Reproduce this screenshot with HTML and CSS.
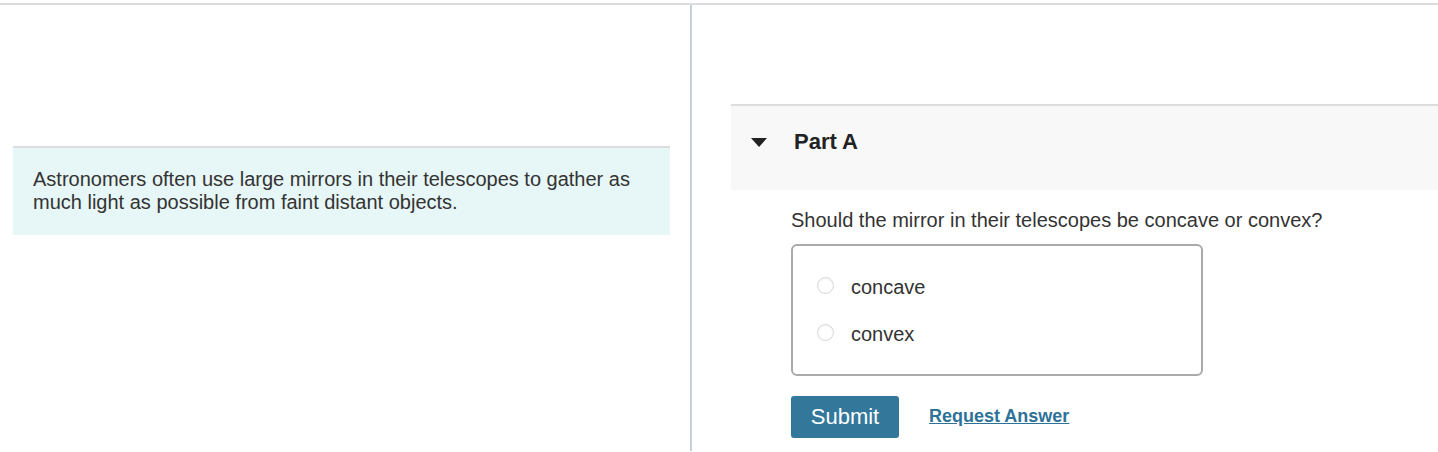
FILE: index.html
```html
<!DOCTYPE html>
<html lang="en">
<head>
<meta charset="utf-8">
<title>Part A</title>
<link rel="stylesheet" href="styles.css">
</head>
<body>
<div class="page">
  <div class="main">
    <div class="left-col">
      <div class="intro">
        <p>Astronomers often use large mirrors in their telescopes to gather as much light as possible from faint distant objects.</p>
      </div>
    </div>
    <div class="right-col">
      <section class="part">
        <div class="part-header">
          <span class="caret"></span>
          <h2 class="part-title">Part A</h2>
        </div>
        <div class="part-body">
          <p class="question">Should the mirror in their telescopes be concave or convex?</p>
          <div class="choices">
            <label class="choice"><span class="radio"></span><span class="choice-label">concave</span></label>
            <label class="choice"><span class="radio"></span><span class="choice-label">convex</span></label>
          </div>
          <div class="actions">
            <button class="submit" type="button">Submit</button>
            <a class="request" href="#">Request Answer</a>
          </div>
        </div>
      </section>
    </div>
  </div>
</div>
</body>
</html>
```

FILE: styles.css
```css
html, body {
  margin: 0;
  padding: 0;
  background: #ffffff;
}

body {
  font-family: "Liberation Sans", Arial, sans-serif;
  color: #333333;
  height: 452px;
  overflow: hidden;
}

.page {
  padding-top: 3px;
  height: 449px;
  box-sizing: border-box;
}

.main {
  border-top: 2px solid #dddddd;
  display: flex;
  height: 100%;
}

.left-col {
  width: 690px;
  flex: 0 0 690px;
  border-right: 2px solid #c6d1e0;
  padding-top: 141px;
}

.intro {
  margin: 0 20px 0 13px;
  background: #e7f6f6;
  border-top: 2px solid #dddddd;
  padding: 20px 20px 21px 20px;
}

.intro p {
  margin: 0;
  font-size: 20px;
  line-height: 23px;
  color: #333333;
}

.right-col {
  flex: 1;
  padding-top: 99px;
  padding-left: 39px;
}

.part-header {
  display: flex;
  align-items: center;
  height: 72px;
  padding-bottom: 12px;
  background: #f8f8f8;
  border-top: 2px solid #dddddd;
  padding-left: 20px;
}

.caret {
  width: 0;
  height: 0;
  border-left: 8.5px solid transparent;
  border-right: 8.5px solid transparent;
  border-top: 9px solid #222222;
}

.part-title {
  margin: 0 0 0 27px;
  font-size: 22px;
  line-height: 26px;
  font-weight: bold;
  color: #222222;
}

.part-body {
  padding-left: 60px;
}

.question {
  margin: 19px 0 0 0;
  font-size: 20px;
  line-height: 23px;
  color: #333333;
}

.choices {
  margin-top: 12px;
  width: 412px;
  height: 132px;
  box-sizing: border-box;
  border: 2px solid #aaaaaa;
  border-radius: 6px;
  display: flex;
  flex-direction: column;
  padding-top: 30px;
  gap: 24px;
}

.choice {
  display: flex;
  align-items: center;
  height: 23px;
  padding-left: 24px;
}

.radio {
  width: 15px;
  height: 15px;
  border: 1px solid #d6d6d6;
  border-radius: 50%;
  background: #ffffff;
  box-shadow: inset 0 1px 2px rgba(0,0,0,0.06);
  margin-top: -4px;
}

.choice-label {
  margin-left: 17px;
  font-size: 20px;
  line-height: 23px;
  color: #333333;
}

.actions {
  margin-top: 20px;
  display: flex;
  align-items: center;
}

.submit {
  width: 108px;
  height: 42px;
  background: #33789a;
  color: #ffffff;
  border: none;
  border-radius: 3px;
  font-family: "Liberation Sans", Arial, sans-serif;
  font-size: 22px;
  padding: 0;
}

.request {
  margin-left: 30px;
  font-size: 18px;
  font-weight: bold;
  color: #2e7298;
  text-decoration: underline;
  margin-top: -2px;
}
```
